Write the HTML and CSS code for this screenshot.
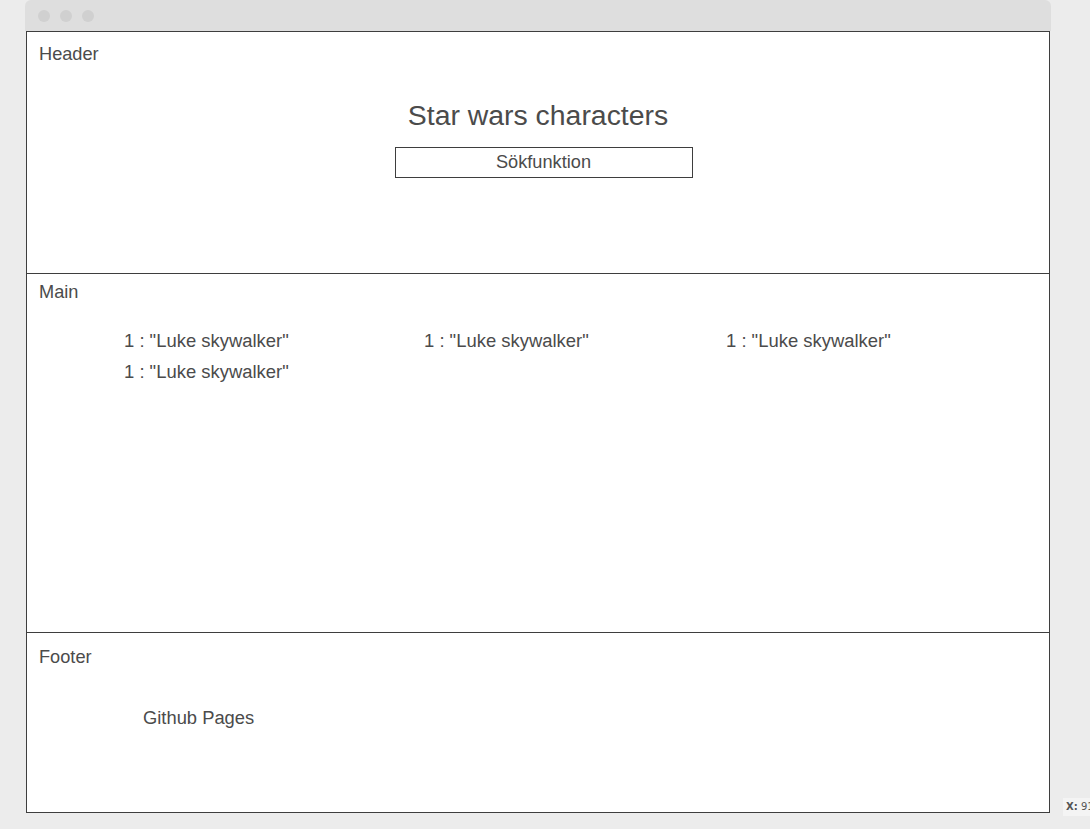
FILE: index.html
```html
<!DOCTYPE html>
<html lang="sv">
<head>
<meta charset="utf-8">
<title>Star wars characters</title>
<link rel="stylesheet" href="styles.css">
</head>
<body>
<div class="window">
  <div class="titlebar">
    <span class="dot"></span><span class="dot"></span><span class="dot"></span>
  </div>
  <div class="frame">
    <section class="header">
      <div class="label">Header</div>
      <div class="header-center">
        <h1 class="title">Star wars characters</h1>
        <div class="search">Sökfunktion</div>
      </div>
    </section>
    <section class="main">
      <div class="label">Main</div>
      <div class="list">
        <div class="item">1 : "Luke skywalker"</div>
        <div class="item">1 : "Luke skywalker"</div>
        <div class="item">1 : "Luke skywalker"</div>
        <div class="item">1 : "Luke skywalker"</div>
      </div>
    </section>
    <section class="footer">
      <div class="label">Footer</div>
      <div class="footer-link">Github Pages</div>
    </section>
  </div>
</div>
<div class="coord"><b>X:</b> 91</div>
</body>
</html>
```

FILE: styles.css
```css
html, body {
  margin: 0;
  padding: 0;
}
body {
  background: #ececec;
  font-family: "Liberation Sans", Arial, sans-serif;
  color: #4b4b4b;
  height: 829px;
  overflow: hidden;
  position: relative;
}
.window {
  margin-left: 25px;
  width: 1026px;
}
.titlebar {
  height: 31px;
  background: #dedede;
  border-radius: 6px 6px 0 0;
  display: flex;
  align-items: center;
  gap: 10px;
  padding-left: 13px;
  box-sizing: border-box;
}
.dot {
  width: 12px;
  height: 12px;
  border-radius: 50%;
  background: #d0d0d0;
}
.frame {
  margin-left: 1px;
  width: 1024px;
  box-sizing: border-box;
  border: 1px solid #3e3e3e;
  background: #fff;
}
.label {
  font-size: 18.2px;
  line-height: 20px;
  padding-left: 12px;
}
.header {
  height: 242px;
  box-sizing: border-box;
  border-bottom: 1px solid #3e3e3e;
  padding-top: 12px;
}
.header-center {
  display: flex;
  flex-direction: column;
  align-items: center;
  padding-top: 35px;
}
.title {
  margin: 0;
  font-size: 28.4px;
  font-weight: normal;
  line-height: 32px;
}
.search {
  margin-top: 16px;
  margin-left: 11px;
  width: 298px;
  height: 31px;
  box-sizing: border-box;
  border: 1px solid #3e3e3e;
  font-size: 18.2px;
  line-height: 28px;
  text-align: center;
}
.main {
  height: 359px;
  box-sizing: border-box;
  border-bottom: 1px solid #3e3e3e;
  padding-top: 8px;
}
.list {
  display: grid;
  grid-template-columns: 300px 302px 300px;
  row-gap: 11px;
  padding-left: 97px;
  margin-top: 29px;
  font-size: 18.45px;
  line-height: 20px;
}
.footer {
  height: 179px;
  box-sizing: border-box;
  padding-top: 14px;
}
.footer-link {
  font-size: 18.35px;
  line-height: 20px;
  padding-left: 116px;
  margin-top: 41px;
}
.coord {
  position: absolute;
  left: 1063px;
  top: 798px;
  padding: 2px 3px;
  background: #f4f4f4;
  font-family: "DejaVu Sans", sans-serif;
  font-size: 10px;
  line-height: 14px;
  color: #555;
  white-space: nowrap;
}
```
